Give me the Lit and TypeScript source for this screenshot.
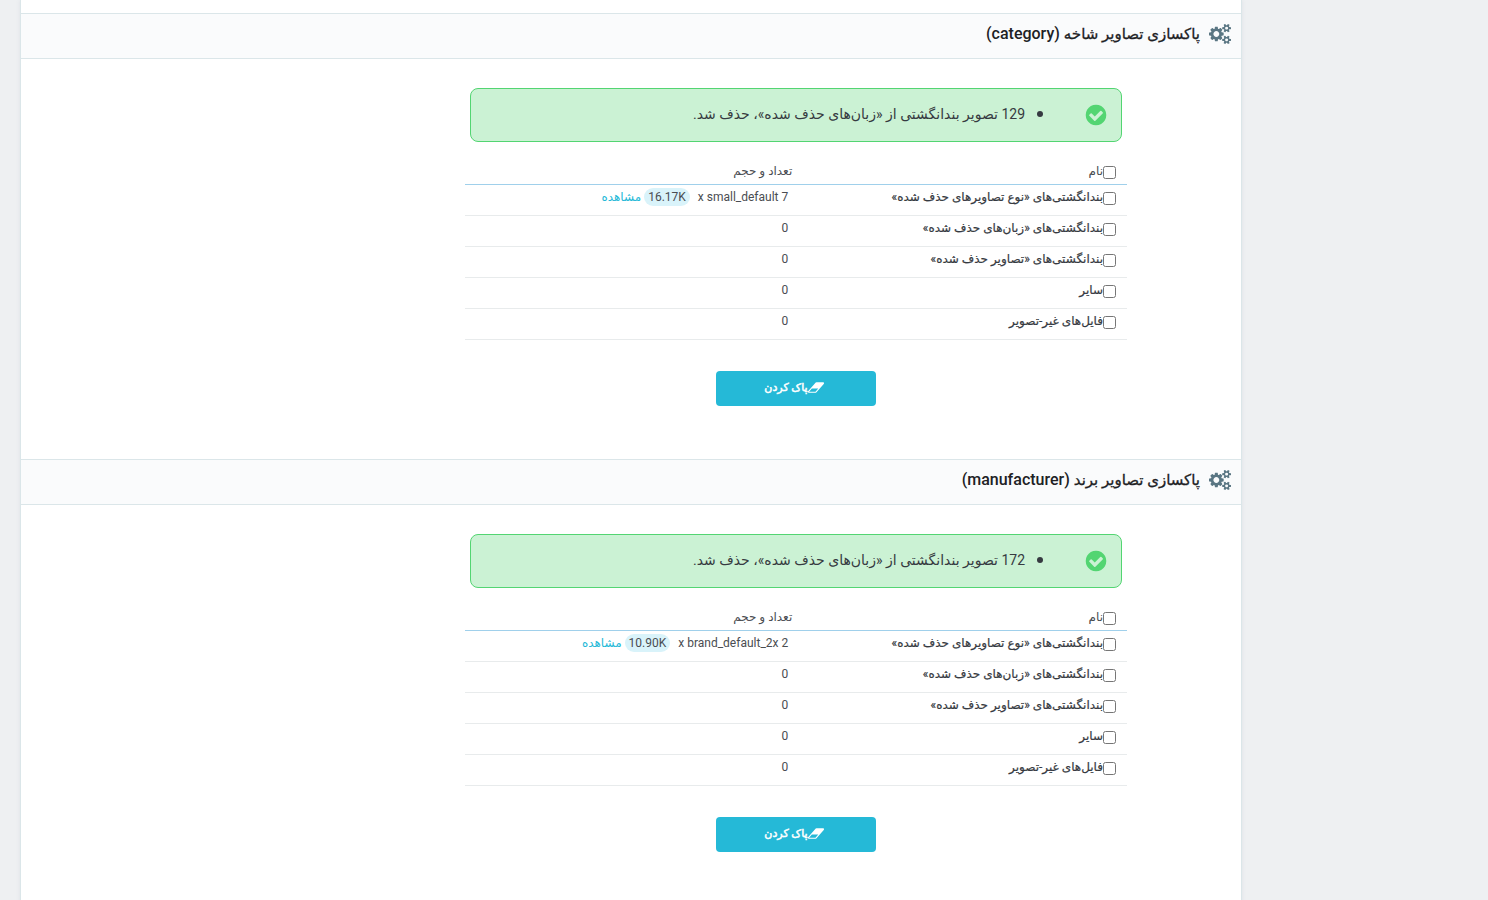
import { LitElement, html, svg, css } from "lit";
import { customElement, property } from "lit/decorators.js";

const COGS =
  "M896 896q0-106-75-181t-181-75-181 75-75 181 75 181 181 75 181-75 75-181zm768 512q0-52-38-90t-90-38-90 38-38 90q0 53 37.500 90.500t90.500 37.500 90.500-37.500 37.500-90.500zm0-1024q0-52-38-90t-90-38-90 38-38 90q0 53 37.500 90.500t90.500 37.500 90.500-37.500 37.500-90.500zm-384 421v185q0 10-7 19.500t-16 10.500l-155 24q-11 35-32 76 34 48 90 115 7 11 7 20 0 12-7 19-23 30-82.500 89.500t-78.500 59.500q-11 0-21-7l-115-90q-37 19-77 31-11 108-23 155-7 24-30 24h-186q-11 0-20-7.500t-10-17.500l-23-153q-34-10-75-31l-118 89q-7 7-20 7-11 0-21-8-144-133-144-160 0-9 7-19 10-14 41-53t47-61q-23-44-35-82l-152-24q-10-1-17-9.500t-7-19.500v-185q0-10 7-19.500t16-10.500l155-24q11-35 32-76-34-48-90-115-7-11-7-20 0-12 7-20 22-30 82-89t79-59q11 0 21 7l115 90q34-18 77-32 11-108 23-154 7-24 30-24h186q11 0 20 7.500t10 17.500l23 153q34 10 75 31l118-89q8-7 20-7 11 0 21 8 144 133 144 160 0 8-7 19-12 16-42 54t-45 60q23 48 34 82l152 23q10 2 17 10.500t7 19.500zm640 533v140q0 16-149 31-12 27-30 52 51 113 51 138 0 4-4 7-122 71-124 71-8 0-46-47t-52-68q-20 2-30 2t-30-2q-14 21-52 68t-46 47q-2 0-124-71-4-3-4-7 0-25 51-138-18-25-30-52-149-15-149-31v-140q0-16 149-31 13-29 30-52-51-113-51-138 0-4 4-7 4-2 35-20t59-34 30-16q8 0 46 46.500t52 67.500q20-2 30-2t30 2q51-71 92-112l6-2q4 0 124 70 4 3 4 7 0 25-51 138 17 23 30 52 149 15 149 31zm0-1024v140q0 16-149 31-12 27-30 52 51 113 51 138 0 4-4 7-122 71-124 71-8 0-46-47t-52-68q-20 2-30 2t-30-2q-14 21-52 68t-46 47q-2 0-124-71-4-3-4-7 0-25 51-138-18-25-30-52-149-15-149-31v-140q0-16 149-31 13-29 30-52-51-113-51-138 0-4 4-7 4-2 35-20t59-34 30-16q8 0 46 46.500t52 67.500q20-2 30-2t30 2q51-71 92-112l6-2q4 0 124 70 4 3 4 7 0 25-51 138 17 23 30 52 149 15 149 31z";
const CHECK =
  "M1412 734q0-28-18-46l-91-90q-19-19-45-19t-45 19l-408 407-226-226q-19-19-45-19t-45 19l-91 90q-18 18-18 46 0 27 18 45l362 362q19 19 45 19 27 0 46-19l543-543q18-18 18-45zm252 162q0 209-103 385.500t-279.500 279.500-385.500 103-385.500-103-279.500-279.500-103-385.500 103-385.500 279.500-279.500 385.500-103 385.500 103 279.500 279.500 103 385.500z";
const ERASER =
  "M896 1408l336-384h-768l-336 384h768zm1013-1077q15 34 9.500 71.500t-30.500 65.500l-896 1024q-38 44-96 44h-768q-38 0-69.500-20.500t-47.500-54.500q-15-34-9.500-71.500t30.500-65.500l896-1024q38-44 96-44h768q38 0 69.500 20.500t47.500 54.500z";

const shape = (d: string) => svg`<path fill="currentColor" d=${d}></path>`;

interface Usage {
  count: number;
  type?: string;
  size?: string;
}

interface Cleaner {
  id: string;
  title: string;
  removed: number;
  first: Usage;
}

const ROWS = [
  "بندانگشتی‌های «نوع تصاویرهای حذف شده»",
  "بندانگشتی‌های «زبان‌های حذف شده»",
  "بندانگشتی‌های «تصاویر حذف شده»",
  "سایر",
  "فایل‌های غیر-تصویر",
];

const CLEANERS: Cleaner[] = [
  {
    id: "category",
    title: "پاکسازی تصاویر شاخه",
    removed: 129,
    first: { count: 7, type: "small_default", size: "16.17K" },
  },
  {
    id: "manufacturer",
    title: "پاکسازی تصاویر برند",
    removed: 172,
    first: { count: 2, type: "brand_default_2x", size: "10.90K" },
  },
];

@customElement("image-cleaner")
export class ImageCleaner extends LitElement {
  @property({ attribute: false }) data!: Cleaner;

  static styles = css`
    :host {
      display: block;
    }
    .head {
      display: flex;
      align-items: center;
      gap: 9px;
      height: 44px;
      padding: 0 10px;
      border-top: 1px solid #dbe6e9;
      border-bottom: 1px solid #dbe6e9;
      background: #fafbfc;
      color: #202124;
    }
    .cogs {
      width: 22px;
      height: 22px;
      margin-bottom: 4px;
      color: #5a7683;
    }
    .title {
      margin: 0;
      padding-bottom: 4px;
      font-size: 16px;
      line-height: 24px;
      font-weight: 500;
    }
    .title-fa {
      font-size: 15px;
      -webkit-text-stroke: 0.3px currentColor;
    }
    .body {
      max-width: 662px;
      margin-inline-start: 114px;
      padding: 29px 0 53px;
    }
    .alert {
      box-sizing: border-box;
      display: flex;
      align-items: center;
      gap: 43px;
      height: 54px;
      margin: 0 5px;
      padding: 0 13px 1px;
      border: 1px solid #53d572;
      border-radius: 8px;
      background: #cbf2d4;
      color: #363a41;
    }
    .tick {
      width: 24px;
      height: 24px;
      color: #53d572;
    }
    .list {
      margin: 0;
      padding: 0 16px 2px;
      font-size: 14px;
      line-height: 24px;
    }
    .list li::marker {
      font-size: 18px;
    }
    .table {
      width: 100%;
      margin-top: 18px;
      border-collapse: collapse;
      table-layout: fixed;
      font-size: 12px;
      line-height: 18px;
      color: #4a4d52;
    }
    .name {
      width: 48%;
    }
    th {
      font-weight: 400;
      text-align: start;
      padding: 2px 3px 4px;
      border-bottom: 1px solid #a0d0eb;
    }
    td {
      height: 31px;
      padding: 3px 7px 0;
      vertical-align: top;
      border-bottom: 1px solid #e8ebec;
      box-sizing: border-box;
    }
    th.name,
    td.name {
      padding-inline-start: 11px;
    }
    td.name {
      color: #363a41;
      -webkit-text-stroke: 0.2px currentColor;
    }
    .pick {
      display: flex;
    }
    .box {
      width: 13px;
      height: 13px;
      margin: 4px 0 0;
    }
    .size {
      display: inline-block;
      margin-right: 5px;
      padding: 0 4px;
      border-radius: 9px;
      background: #d9f3fa;
    }
    a {
      color: #25b9d7;
      text-decoration: none;
    }
    .clear {
      display: flex;
      align-items: center;
      justify-content: center;
      width: 160px;
      height: 35px;
      margin: 31px auto 0;
      padding: 0 4px 2px 0;
      border: 0;
      border-radius: 4px;
      background: #25b9d7;
      color: #fff;
      font: inherit;
      font-size: 11px;
      -webkit-text-stroke: 0.5px currentColor;
    }
    .eraser {
      width: 16px;
      height: 15px;
    }
  `;

  private usage(u: Usage) {
    return u.type
      ? html`<span>${`${u.count} x ${u.type}`}</span> <span class="size" dir="ltr">${u.size}</span> <a href="#view">مشاهده</a>`
      : u.count;
  }

  render() {
    const { id, title, removed, first } = this.data;
    return html`
      <header class="head">
        <svg class="cogs" viewBox="0 0 1920 1792" aria-hidden="true">${shape(COGS)}</svg>
        <h2 class="title"><span class="title-fa">${title}</span> (${id})</h2>
      </header>
      <div class="body">
        <div class="alert" role="status">
          <svg class="tick" viewBox="0 0 1792 1792" aria-hidden="true">${shape(CHECK)}</svg>
          <ul class="list">
            <li>${removed} تصویر بندانگشتی از «زبان‌های حذف شده»، حذف شد.</li>
          </ul>
        </div>
        <table class="table">
          <thead>
            <tr>
              <th class="name">
                <span class="pick">
                  <input class="box" type="checkbox" id="all" /><label for="all">نام</label>
                </span>
              </th>
              <th>تعداد و حجم</th>
            </tr>
          </thead>
          <tbody>
            ${ROWS.map(
              (label, i) => html`<tr>
                <td class="name">
                  <span class="pick">
                    <input class="box" type="checkbox" id="row-${i}" /><label for="row-${i}">${label}</label>
                  </span>
                </td>
                <td>${this.usage(i === 0 ? first : { count: 0 })}</td>
              </tr>`
            )}
          </tbody>
        </table>
        <button class="clear" type="button">
          <svg class="eraser" viewBox="0 0 1920 1792" aria-hidden="true">${shape(ERASER)}</svg>پاک کردن
        </button>
      </div>
    `;
  }
}

@customElement("app-root")
export class AppRoot extends LitElement {
  static styles = css`
    :host {
      display: block;
      min-height: 100vh;
      direction: rtl;
      background: #eef0f2;
      font-family: Roboto, "DejaVu Sans", sans-serif;
    }
    .panel {
      box-sizing: border-box;
      min-height: 100vh;
      margin-inline: 246px 20px;
      padding-top: 13px;
      border: 0 solid #dbe6e9;
      border-width: 0 1px;
      background: #fff;
      box-shadow: 0 0 4px rgba(109, 124, 144, 0.12);
    }
  `;

  render() {
    return html`
      <main class="panel">
        ${CLEANERS.map((c) => html`<image-cleaner .data=${c}></image-cleaner>`)}
      </main>
    `;
  }
}
